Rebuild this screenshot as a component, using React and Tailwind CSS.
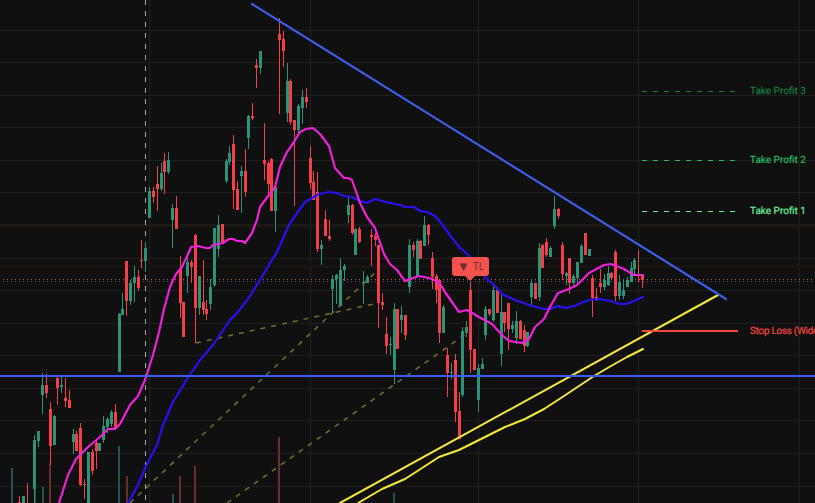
// ─── Trading chart ───────────────────────────────────────────────────

const GREEN = "#2b9478"
const RED = "#f23f4a"

// [x, wickTop, bodyTop, bodyBottom, wickBottom, colour]
const CANDLES = [
	[19, 496, 502, 503, 503, "r"], [23, 496, 496, 503, 503, "g"], [27, 483, 503, 503, 503, "r"],
	[34, 435, 440, 489, 503, "g"], [38, 431, 431, 441, 447, "g"], [42, 373, 385, 395, 414, "g"],
	[46, 374, 385, 393, 398, "r"], [50, 402, 409, 446, 465, "r"], [54, 415, 416, 445, 445, "g"],
	[57, 377, 378, 388, 405, "r"], [61, 377, 385, 387, 393, "g"], [65, 378, 398, 401, 407, "r"],
	[69, 390, 400, 408, 408, "r"], [73, 429, 434, 442, 454, "g"], [76, 431, 434, 451, 451, "r"],
	[80, 423, 428, 485, 486, "r"], [84, 479, 484, 485, 499, "r"], [88, 452, 452, 503, 503, "g"],
	[92, 449, 452, 471, 475, "r"], [96, 440, 443, 451, 469, "r"], [99, 443, 443, 451, 451, "g"],
	[103, 416, 426, 440, 443, "g"], [107, 417, 419, 427, 433, "g"], [111, 410, 412, 424, 427, "g"],
	[115, 404, 412, 429, 429, "r"], [119, 313, 314, 372, 372, "g"], [122, 293, 309, 315, 315, "g"],
	[126, 261, 261, 301, 316, "r"], [130, 280, 283, 301, 305, "g"], [134, 266, 277, 283, 302, "g"],
	[138, 270, 277, 288, 291, "r"], [141, 240, 260, 261, 268, "r"], [145, 242, 248, 261, 272, "g"],
	[149, 187, 191, 218, 218, "g"], [153, 187, 191, 197, 203, "r"], [157, 166, 184, 189, 211, "r"],
	[161, 163, 173, 189, 191, "g"], [164, 153, 161, 172, 194, "r"], [168, 152, 160, 172, 174, "g"],
	[172, 204, 208, 220, 248, "g"], [176, 196, 208, 229, 229, "r"], [180, 256, 269, 303, 318, "r"],
	[183, 302, 302, 337, 337, "r"], [187, 252, 262, 276, 293, "g"], [191, 260, 262, 267, 283, "r"],
	[195, 234, 235, 308, 343, "r"], [199, 276, 276, 308, 315, "g"], [203, 260, 302, 310, 315, "r"],
	[206, 300, 309, 314, 320, "r"], [210, 279, 287, 304, 310, "g"], [214, 228, 228, 285, 287, "g"],
	[218, 215, 225, 249, 257, "g"], [222, 224, 224, 242, 242, "r"], [226, 159, 161, 181, 183, "g"],
	[229, 146, 153, 162, 165, "g"], [233, 135, 144, 190, 209, "r"], [237, 181, 189, 210, 210, "r"],
	[241, 166, 171, 176, 213, "g"], [245, 149, 171, 192, 197, "r"], [248, 115, 116, 138, 149, "g"],
	[252, 103, 116, 118, 120, "r"], [256, 59, 65, 68, 88, "r"], [260, 51, 51, 68, 74, "g"],
	[264, 123, 160, 164, 180, "r"], [268, 161, 163, 184, 195, "r"], [271, 158, 159, 211, 211, "r"],
	[275, 185, 187, 211, 232, "g"], [279, 18, 34, 40, 114, "r"], [283, 31, 39, 51, 67, "r"],
	[287, 63, 81, 113, 122, "g"], [290, 79, 81, 122, 125, "r"], [294, 120, 120, 130, 206, "r"],
	[298, 104, 106, 130, 135, "g"], [302, 90, 97, 108, 124, "g"], [306, 88, 97, 102, 108, "r"],
	[310, 146, 158, 183, 189, "r"], [313, 171, 182, 200, 200, "r"], [317, 172, 192, 249, 252, "r"],
	[321, 240, 245, 249, 265, "g"], [325, 210, 219, 236, 236, "r"], [329, 220, 236, 239, 241, "r"],
	[332, 275, 279, 289, 313, "g"], [336, 274, 275, 279, 304, "g"], [340, 258, 270, 306, 306, "g"],
	[344, 264, 266, 270, 281, "g"], [348, 196, 205, 215, 223, "g"], [352, 204, 205, 233, 235, "r"],
	[355, 228, 229, 255, 255, "g"], [359, 227, 229, 242, 243, "r"], [363, 271, 282, 283, 304, "g"],
	[367, 275, 277, 283, 283, "g"], [371, 229, 235, 237, 266, "r"], [375, 233, 236, 240, 246, "r"],
	[378, 245, 245, 303, 328, "r"], [382, 293, 302, 305, 310, "r"], [386, 317, 334, 346, 354, "r"],
	[390, 337, 344, 345, 355, "g"], [394, 303, 309, 370, 384, "g"], [397, 309, 309, 349, 349, "r"],
	[401, 306, 315, 320, 333, "g"], [405, 315, 315, 335, 340, "r"], [409, 239, 245, 287, 293, "g"],
	[413, 242, 245, 250, 257, "r"], [417, 239, 241, 276, 276, "g"], [420, 240, 241, 259, 259, "r"],
	[424, 216, 225, 246, 246, "g"], [428, 224, 225, 235, 245, "r"], [432, 252, 258, 277, 289, "r"],
	[436, 274, 276, 290, 303, "r"], [439, 280, 280, 333, 343, "r"], [443, 305, 307, 333, 333, "g"],
	[447, 348, 355, 373, 397, "r"], [451, 363, 372, 373, 379, "g"], [455, 354, 360, 412, 422, "r"],
	[459, 392, 411, 439, 439, "r"], [462, 327, 331, 395, 397, "g"], [466, 321, 327, 333, 337, "g"],
	[470, 282, 290, 350, 373, "r"], [474, 349, 349, 370, 370, "r"], [478, 364, 368, 400, 412, "g"],
	[482, 358, 364, 369, 369, "g"], [485, 306, 309, 335, 340, "g"], [489, 309, 309, 314, 316, "r"],
	[493, 283, 290, 320, 322, "g"], [497, 287, 290, 313, 313, "r"], [501, 295, 312, 354, 366, "g"],
	[504, 312, 312, 323, 332, "r"], [508, 303, 303, 329, 350, "r"], [512, 321, 325, 329, 333, "g"],
	[516, 311, 321, 338, 344, "g"], [520, 320, 321, 339, 339, "r"], [524, 325, 330, 346, 352, "r"],
	[527, 332, 332, 346, 347, "g"], [531, 280, 283, 297, 307, "g"], [535, 283, 283, 299, 299, "r"],
	[539, 243, 248, 297, 301, "g"], [542, 244, 245, 268, 268, "r"], [546, 238, 242, 255, 257, "r"],
	[550, 246, 248, 257, 257, "g"], [554, 196, 209, 226, 229, "g"], [558, 208, 209, 216, 219, "r"],
	[562, 242, 245, 274, 280, "r"], [566, 272, 273, 276, 285, "g"], [569, 258, 258, 283, 294, "r"],
	[573, 274, 276, 283, 285, "g"], [577, 262, 262, 278, 285, "g"], [581, 244, 246, 263, 263, "g"],
	[585, 233, 233, 255, 255, "r"], [589, 249, 249, 256, 256, "g"], [592, 275, 278, 298, 317, "r"],
	[596, 288, 297, 299, 301, "r"], [600, 269, 283, 287, 293, "r"], [604, 274, 280, 287, 290, "g"],
	[608, 266, 273, 285, 286, "g"], [611, 272, 273, 278, 279, "r"], [615, 250, 252, 296, 301, "r"],
	[619, 275, 282, 296, 300, "g"], [623, 280, 290, 296, 299, "g"], [627, 277, 280, 287, 287, "g"],
	[631, 262, 268, 282, 282, "g"], [634, 258, 260, 269, 276, "g"], [638, 250, 274, 275, 282, "r"],
	[642, 274, 274, 280, 288, "r"],
]

// [x, top, colour]
const VOLUME = [
	[12, 468, "g"], [35, 489, "g"], [43, 487, "g"], [50, 463, "r"], [88, 499, "g"], [119, 446, "g"],
	[127, 476, "r"], [173, 494, "g"], [180, 476, "r"], [195, 466, "r"], [279, 437, "r"], [394, 493, "g"],
]

const GRID_Y = [30, 62, 95, 127, 160, 192, 225, 258, 290, 323, 355, 388, 420, 453, 486]
const GRID_X = [149, 310, 478, 638, 799]

// Price levels on the right: line plus its label
const LEVELS = [
	{ label: "Take Profit 3", color: "#1c7a45", y: 91, dash: "5 6" },
	{ label: "Take Profit 2", color: "#2cb765", y: 160, dash: "5 6" },
	{ label: "Take Profit 1", color: "#66f09a", y: 211, dash: "5 6" },
	{ label: "Stop Loss (Wide)", color: "#f0483f", y: 331, width: 2, spacing: "-0.3" },
]

const MAGENTA =
	"59,503 68,475 76,459 88,447 100,437 108,429 115,429 120,424 130,405 138,396 145,380 153,355 159,332 164,309 170,287 176,274 182,267 189,252 191,247 198,246 206,248 210,248 213,245 223,243 229,239 233,239 237,241 242,241 245,243 252,233 257,220 260,207 269,195 275,187 280,167 287,152 294,142 300,132 306,129 313,128 320,134 329,146 335,168 344,178 348,178 352,180 360,203 367,217 375,228 384,254 390,264 397,270 405,281 410,279 419,276 429,278 439,282 445,292 459,312 467,310 479,317 492,324 502,335 509,341 522,343 529,339 535,327 544,319 551,305 558,293 569,289 577,285 589,273 604,265 611,264 624,269 634,275 643,275"
const SLOW_MA =
	"128,503 137,487 147,464 157,445 163,425 173,402 187,379 200,360 213,345 230,320 237,313 248,299 260,280 272,260 277,252 290,223 305,202 319,194 329,192 337,193 344,196 352,197 360,201 367,203 375,199 390,203 400,205 405,207 414,207 420,211 427,212 435,216 442,224 452,238 460,248 465,252 475,262 485,277 494,285 502,294 515,300 529,305 544,309 551,309 557,306 566,308 574,306 581,303 589,300 599,299 611,301 619,304 626,304 634,301 643,297"
const LOWER_CHANNEL =
	"358,503 382,489 405,479 419,470 439,457 459,450 479,440 505,427 525,419 544,409 564,396 594,376 611,366 627,357 643,349"

function Candle({ x, wickTop, bodyTop, bodyBottom, wickBottom, color }) {
	const fill = color === "g" ? GREEN : RED
	return (
		<g fill={fill}>
			<rect x={x} y={wickTop} width={1} height={wickBottom - wickTop} />
			<rect x={x - 1} y={bodyTop} width={3} height={Math.max(bodyBottom - bodyTop, 1)} />
		</g>
	)
}

export default function App() {
	return (
		<div className="relative h-[503px] w-[815px] overflow-hidden bg-[#101010]">
			<svg width="815" height="503" className="block" shapeRendering="crispEdges">
				{/* Grid */}
				{GRID_Y.map((y) => (
					<rect key={y} x="0" y={y} width="815" height="1" fill="#1f1f1f" />
				))}
				{GRID_X.map((x) => (
					<rect key={x} x={x} y="0" width="1" height="503" fill="#1f1f1f" />
				))}
				<rect x="0" y="224" width="815" height="3" fill="#1c1813" />
				<rect x="0" y="265" width="815" height="3" fill="#181412" />

				{/* Volume */}
				{VOLUME.map(([x, top, c]) => (
					<rect
						key={x}
						x={x - 1}
						y={top}
						width="2"
						height={503 - top}
						fill={c === "g" ? "#1f5750" : "#6b2e2e"}
					/>
				))}

				{/* Time marker and last price dots */}
				<line x1="145.5" y1="0" x2="145.5" y2="503" stroke="#a8a8a8" strokeDasharray="5 6" />
				<line x1="3" y1="279.5" x2="815" y2="279.5" stroke="#a8604f" strokeDasharray="1 3" />
				<line x1="3" y1="281.5" x2="815" y2="281.5" stroke="#7c3c8c" strokeDasharray="1 3" />

				{/* Olive trend guides */}
				<g shapeRendering="auto" fill="none" stroke="#75712c" strokeDasharray="5 6" strokeWidth="1.5">
					<line x1="196" y1="343" x2="378" y2="303" />
					<line x1="130" y1="503" x2="378" y2="270" />
					<line x1="227" y1="503" x2="470" y2="331" />
				</g>

				{CANDLES.map(([x, wickTop, bodyTop, bodyBottom, wickBottom, color]) => (
					<Candle
						key={x}
						x={x}
						wickTop={wickTop}
						bodyTop={bodyTop}
						bodyBottom={bodyBottom}
						wickBottom={wickBottom}
						color={color}
					/>
				))}

				{/* Moving averages and trend lines */}
				<g shapeRendering="auto" fill="none" strokeLinejoin="round" strokeLinecap="round" strokeWidth="2.2">
					<polyline points={SLOW_MA} stroke="#2a10f0" />
					<polyline points={MAGENTA} stroke="#ee20d8" />
					<line x1="340" y1="503" x2="718" y2="295" stroke="#f5e638" strokeWidth="2" />
					<polyline points={LOWER_CHANNEL} stroke="#f5e638" strokeWidth="2" />
					<line x1="252" y1="4" x2="726" y2="299" stroke="#3d5fe8" />
				</g>
				<rect x="0" y="375" width="815" height="2" fill="#3a5af0" />

				{/* Levels */}
				{LEVELS.map((level) => (
					<g key={level.label}>
						<line
							x1="642"
							y1={level.y + (level.width ? 0 : 0.5)}
							x2="738"
							y2={level.y + (level.width ? 0 : 0.5)}
							stroke={level.color}
							strokeWidth={level.width || 1}
							strokeDasharray={level.dash}
						/>
						<text
							x="750"
							y={level.y + 3}
							fill={level.color}
							stroke={level.color}
							strokeWidth="0.2"
							fontSize="10"
							fontFamily="Roboto, sans-serif"
							letterSpacing={level.spacing}
							textRendering="geometricPrecision"
						>
							{level.label}
						</text>
					</g>
				))}
			</svg>

			{/* Signal badge */}
			<div className="absolute left-[452px] top-[257px] flex h-[19px] w-[37px] items-center justify-center gap-[3px] rounded-[3px] bg-[#f5524e] text-[10px] leading-none text-[#6e2e30] font-['Roboto',sans-serif]">
				<span className="text-[13px]">▼</span>
				<span>TL</span>
				<div className="absolute left-[13px] top-[19px] h-0 w-0 border-x-[5px] border-t-[5px] border-x-transparent border-t-[#f5524e]" />
			</div>
		</div>
	)
}
